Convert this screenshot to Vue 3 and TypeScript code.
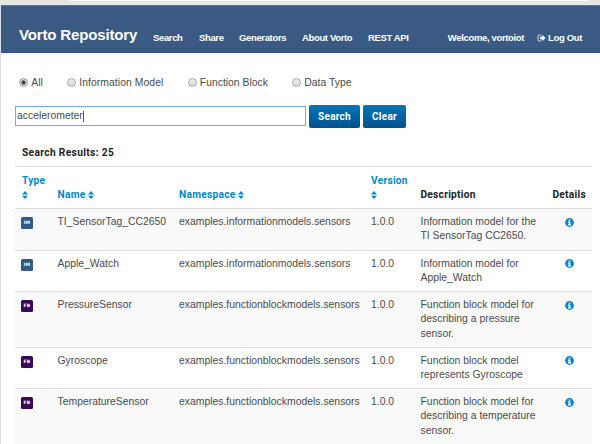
<script setup lang="ts">
import { ref } from 'vue'

interface Model {
  kind: 'IM' | 'FB'
  name: string
  namespace: string
  version: string
  description: string[]
}

const links = ['Search', 'Share', 'Generators', 'About Vorto', 'REST API']
const filters = ['All', 'Information Model', 'Function Block', 'Data Type']
const selected = ref('All')
const query = ref('accelerometer')

const models: Model[] = [
  { kind: 'IM', name: 'TI_SensorTag_CC2650', namespace: 'examples.informationmodels.sensors', version: '1.0.0', description: ['Information model for the', 'TI SensorTag CC2650.'] },
  { kind: 'IM', name: 'Apple_Watch', namespace: 'examples.informationmodels.sensors', version: '1.0.0', description: ['Information model for', 'Apple_Watch'] },
  { kind: 'FB', name: 'PressureSensor', namespace: 'examples.functionblockmodels.sensors', version: '1.0.0', description: ['Function block model for', 'describing a pressure', 'sensor.'] },
  { kind: 'FB', name: 'Gyroscope', namespace: 'examples.functionblockmodels.sensors', version: '1.0.0', description: ['Function block model', 'represents Gyroscope'] },
  { kind: 'FB', name: 'TemperatureSensor', namespace: 'examples.functionblockmodels.sensors', version: '1.0.0', description: ['Function block model for', 'describing a temperature', 'sensor.'] },
]

const columns = [
  { label: 'Type', key: 'type', stacked: true },
  { label: 'Name', key: 'name', stacked: false },
  { label: 'Namespace', key: 'namespace', stacked: false },
  { label: 'Version', key: 'version', stacked: true },
]
</script>

<template>
  <div class="window">
    <div class="chrome"><div class="chrome-field"></div></div>
    <div class="page">
      <header class="navbar">
        <h1 class="brand">Vorto Repository</h1>
        <nav class="links">
          <a v-for="link in links" :key="link" :class="'nav-' + link.split(' ')[0].toLowerCase()">{{ link }}</a>
        </nav>
        <span class="welcome">Welcome, vortoiot</span>
        <a class="logout">
          <svg width="9" height="8" viewBox="0 0 18 16">
            <path d="M8 2H4.500Q2 2 2 4.500v7Q2 14 4.500 14H8" fill="none" stroke="#dfe6ee" stroke-width="2" />
            <path d="M6 5.500h4.500V1.500l6.500 6.500-6.500 6.500v-4H6z" fill="#fff" />
          </svg>
          <span>Log Out</span>
        </a>
      </header>

      <main class="content">
        <div class="filters">
          <label v-for="(filter, i) in filters" :key="filter" :class="['filter', 'filter-' + i]" @click="selected = filter">
            <span class="radio" :class="{ on: selected === filter }"></span>
            <span>{{ filter }}</span>
          </label>
        </div>

        <div class="search">
          <div class="field"><span>{{ query }}</span><i class="caret"></i></div>
          <button class="btn btn-search">Search</button>
          <button class="btn btn-clear" @click="query = ''">Clear</button>
        </div>

        <div class="results">Search Results: 25</div>

        <section class="table">
          <div class="row head">
            <div v-for="col in columns" :key="col.key" :class="['sortable', 'h-' + col.key, { stacked: col.stacked }]">
              <span>{{ col.label }}</span>
              <svg width="6" height="8" viewBox="0 0 6 8"><path d="M0 3.500L3 0l3 3.500zM0 4.700h6L3 8z" fill="#0088cc" /></svg>
            </div>
            <div class="h-description">Description</div>
            <div class="h-details">Details</div>
          </div>
          <div v-for="model in models" :key="model.name" class="row item" :class="{ tall: model.description.length > 2 }">
            <div><span class="badge" :class="model.kind.toLowerCase()">{{ model.kind }}</span></div>
            <div>{{ model.name }}</div>
            <div>{{ model.namespace }}</div>
            <div>{{ model.version }}</div>
            <div><p v-for="line in model.description" :key="line">{{ line }}</p></div>
            <div class="details">
              <svg width="9" height="9" viewBox="0 0 18 18">
                <circle cx="9" cy="9" r="8.800" fill="#0a84cb" />
                <path d="M7.500 2.800h3.200v2.700H7.500zM6 7h4.800v5.500H12V15H6v-2.500h1.400V9.300H6z" fill="#fff" />
              </svg>
            </div>
          </div>
        </section>
      </main>
    </div>
  </div>
</template>

<style>
body {
  margin: 0;
  background: #fff;
  overflow: hidden;
}
</style>

<style scoped>
.window {
  box-sizing: border-box;
  width: 600px;
  height: 444px;
  overflow: hidden;
  background: #fff;
  color: #4b4b4b;
  font: 10.4px/14.4px "Liberation Sans", Arial, sans-serif;
}
.chrome {
  box-sizing: border-box;
  height: 5px;
  padding-left: 70px;
  padding-right: 12px;
  background: #e6e6e3;
}
.chrome-field {
  height: 1px;
  background: #fff;
}
.page {
  box-sizing: border-box;
  height: 439px;
  border-left: 1px solid #dedede;
}
.navbar {
  box-sizing: border-box;
  height: 48px;
  padding: 19px 18px 0 18px;
  display: flex;
  background: #3a5a84;
  border-top: 1px solid #5b7292;
  border-bottom: 1px solid #2f5080;
  color: #fff;
  font-size: 9.500px;
  font-weight: bold;
  letter-spacing: -0.350px;
  line-height: 26px;
  white-space: nowrap;
}
.brand {
  width: 134px;
  margin: 0;
  font-size: 15px;
  letter-spacing: -0.150px;
  line-height: 20px;
}
.links {
  display: flex;
  width: 296px;
}
.nav-search { width: 46px; }
.nav-share { width: 40px; }
.nav-generators { width: 63px; }
.nav-about { width: 66px; }
.links { padding-left: 0.500px; }
.welcome { width: 89.500px; }
.logout {
  display: flex;
  align-items: center;
  height: 26px;
  gap: 2px;
}
.content {
  padding: 22px 8px 0 14px;
}
.filters {
  display: flex;
  height: 30px;
  padding-left: 4px;
}
.filter {
  display: flex;
  height: 17px;
  align-items: center;
  gap: 3.300px;
}
.filter-0 { width: 48px; }
.filter-1 { width: 120.500px; letter-spacing: 0.050px; }
.filter-2 { width: 104.500px; }
.radio {
  box-sizing: border-box;
  width: 9px;
  height: 9px;
  margin-top: -2px;
  border: 1px solid #ababab;
  border-radius: 50%;
  background: linear-gradient(#ececec, #d9d9d9);
}
.radio.on {
  border-color: #999;
  background: radial-gradient(circle, #444 0 1.800px, #e3e3e3 2.500px);
}
.search {
  display: flex;
  height: 40px;
}
.field {
  box-sizing: border-box;
  display: flex;
  align-items: center;
  width: 291px;
  height: 20px;
  margin: 1px 3px 0 0;
  padding: 1px 0 0 1px;
  border: 1px solid #7aa7e4;
}
.caret {
  width: 1px;
  height: 11px;
  background: #555;
}
.btn {
  height: 23px;
  padding: 0;
  border: 0;
  border-radius: 2px;
  background: linear-gradient(#0076b8, #00508c);
  color: #fff;
  font: bold 10px/23px Roboto, sans-serif;
  letter-spacing: 0.250px;
}
.btn-search { width: 51px; margin-right: 3px; }
.btn-clear { width: 43px; }
.results {
  height: 21px;
  padding-left: 7px;
  color: #222;
  font: bold 10.200px/16px Roboto, sans-serif;
  letter-spacing: 0.35px;
}
.table {
  display: flex;
  flex-direction: column;
  width: 577px;
}
.row {
  display: grid;
  grid-template-columns: 35.500px 121.500px 192px 49.500px 132px 45px;
  box-sizing: border-box;
  height: 41.500px;
  padding: 6px 0 0 7px;
  border-top: 1px solid #ddd;
}
.row.head {
  height: 42px;
  padding-top: 7px;
  color: #222;
  font: bold 10.200px/14.400px Roboto, sans-serif;
  letter-spacing: 0.25px;
  align-items: end;
  padding-bottom: 6px;
}
.sortable {
  display: flex;
  align-items: center;
  gap: 3px;
  color: #0088cc;
}
.sortable.stacked {
  flex-direction: column;
  align-items: flex-start;
}
.stacked svg { margin-bottom: 3px; }
.tall { height: 55.500px; }
.item:nth-child(even) { background: #f9f9f9; }
.item p { margin: 0; white-space: nowrap; }
.badge {
  display: block;
  width: 12px;
  height: 12px;
  margin: 2px 0 0 -1px;
  border-radius: 1.500px;
  color: #fff;
  font: bold 4.500px/12px "DejaVu Sans", sans-serif;
  letter-spacing: 0.2px;
  text-align: center;
}
.im { background: #335985; }
.fb { background: #3c0759; }
.details svg {
  display: block;
  margin: 2.500px 0 0 12.900px;
}
</style>
